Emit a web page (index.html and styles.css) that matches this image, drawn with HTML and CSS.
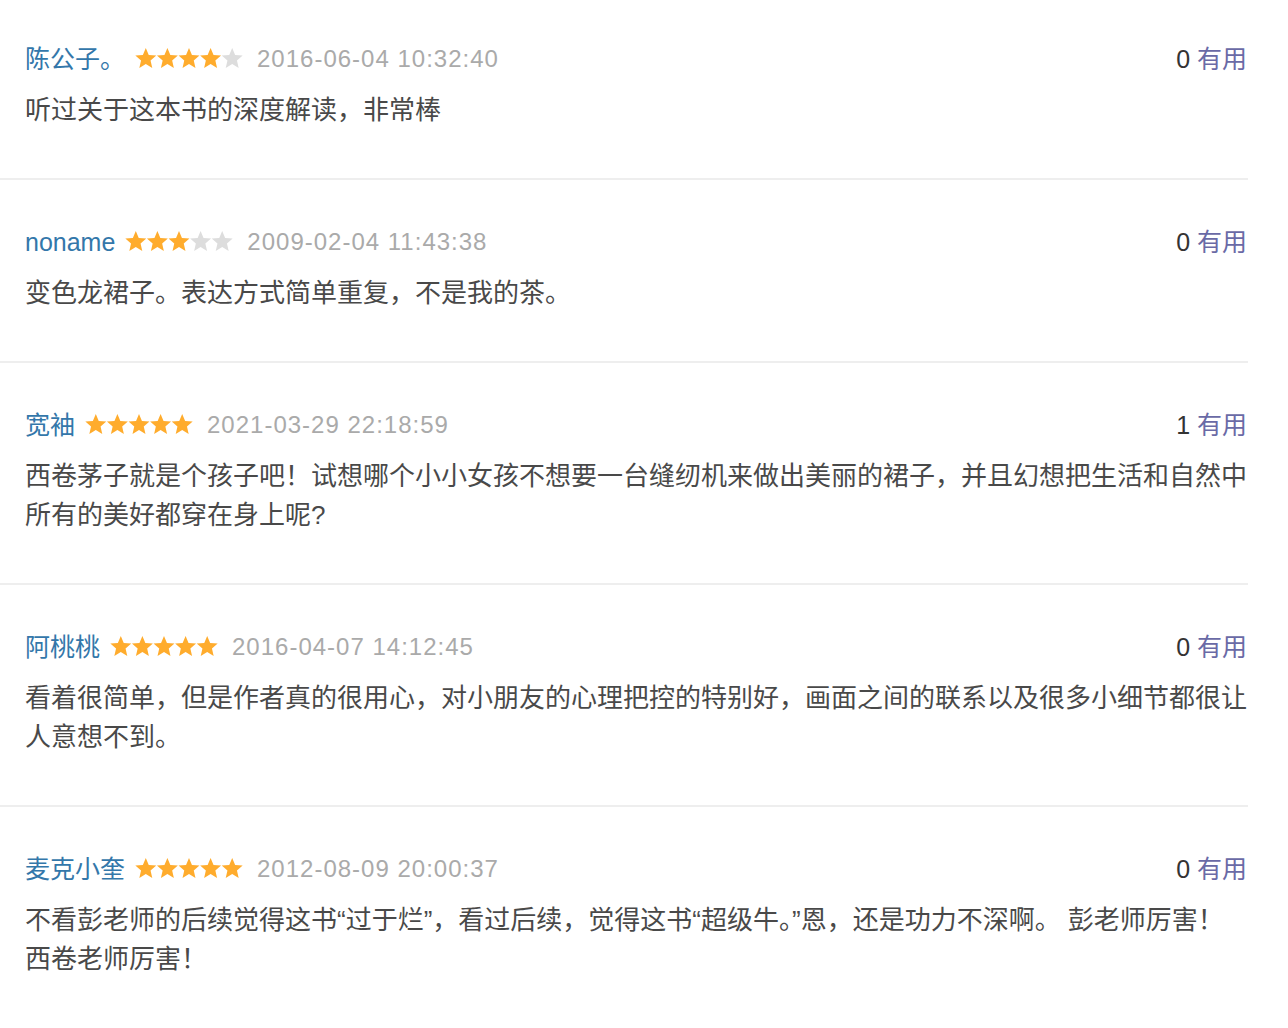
FILE: index.html
```html
<!DOCTYPE html>
<html lang="zh-CN">
<head>
<meta charset="utf-8">
<title>短评</title>
<link rel="stylesheet" href="styles.css">
</head>
<body>
<svg class="defs" width="0" height="0" aria-hidden="true">
  <defs>
    <path id="star" d="M10.8 0L13.74 6.95L21.26 7.6L15.56 12.55L17.27 19.9L10.8 16L4.33 19.9L6.04 12.55L0.34 7.6L7.86 6.95Z"/>
  </defs>
</svg>
<ul class="comments">
  <li class="item">
    <div class="head">
      <div class="meta">
        <a class="name">陈公子。</a>
        <svg class="stars" width="108" height="20" viewBox="0 0 108 20"><use href="#star" class="on" x="0"/><use href="#star" class="on" x="21.6"/><use href="#star" class="on" x="43.2"/><use href="#star" class="on" x="64.8"/><use href="#star" class="off" x="86.4"/></svg>
        <span class="time">2016-06-04 10:32:40</span>
      </div>
      <div class="vote"><span class="count">0</span> <a class="useful">有用</a></div>
    </div>
    <p class="text">听过关于这本书的深度解读，非常棒</p>
  </li>
  <li class="item">
    <div class="head">
      <div class="meta">
        <a class="name">noname</a>
        <svg class="stars" width="108" height="20" viewBox="0 0 108 20"><use href="#star" class="on" x="0"/><use href="#star" class="on" x="21.6"/><use href="#star" class="on" x="43.2"/><use href="#star" class="off" x="64.8"/><use href="#star" class="off" x="86.4"/></svg>
        <span class="time">2009-02-04 11:43:38</span>
      </div>
      <div class="vote"><span class="count">0</span> <a class="useful">有用</a></div>
    </div>
    <p class="text">变色龙裙子。表达方式简单重复，不是我的茶。</p>
  </li>
  <li class="item">
    <div class="head">
      <div class="meta">
        <a class="name">宽袖</a>
        <svg class="stars" width="108" height="20" viewBox="0 0 108 20"><use href="#star" class="on" x="0"/><use href="#star" class="on" x="21.6"/><use href="#star" class="on" x="43.2"/><use href="#star" class="on" x="64.8"/><use href="#star" class="on" x="86.4"/></svg>
        <span class="time">2021-03-29 22:18:59</span>
      </div>
      <div class="vote"><span class="count">1</span> <a class="useful">有用</a></div>
    </div>
    <p class="text">西卷茅子就是个孩子吧！试想哪个小小女孩不想要一台缝纫机来做出美丽的裙子，并且幻想把生活和自然中所有的美好都穿在身上呢?</p>
  </li>
  <li class="item">
    <div class="head">
      <div class="meta">
        <a class="name">阿桃桃</a>
        <svg class="stars" width="108" height="20" viewBox="0 0 108 20"><use href="#star" class="on" x="0"/><use href="#star" class="on" x="21.6"/><use href="#star" class="on" x="43.2"/><use href="#star" class="on" x="64.8"/><use href="#star" class="on" x="86.4"/></svg>
        <span class="time">2016-04-07 14:12:45</span>
      </div>
      <div class="vote"><span class="count">0</span> <a class="useful">有用</a></div>
    </div>
    <p class="text">看着很简单，但是作者真的很用心，对小朋友的心理把控的特别好，画面之间的联系以及很多小细节都很让人意想不到。</p>
  </li>
  <li class="item last">
    <div class="head">
      <div class="meta">
        <a class="name">麦克小奎</a>
        <svg class="stars" width="108" height="20" viewBox="0 0 108 20"><use href="#star" class="on" x="0"/><use href="#star" class="on" x="21.6"/><use href="#star" class="on" x="43.2"/><use href="#star" class="on" x="64.8"/><use href="#star" class="on" x="86.4"/></svg>
        <span class="time">2012-08-09 20:00:37</span>
      </div>
      <div class="vote"><span class="count">0</span> <a class="useful">有用</a></div>
    </div>
    <p class="text">不看彭老师的后续觉得这书“过于烂”，看过后续，觉得这书“超级牛。”恩，还是功力不深啊。 彭老师厉害！西卷老师厉害！</p>
  </li>
</ul>
</body>
</html>
```

FILE: styles.css
```css
html, body {
  margin: 0;
  padding: 0;
  background: #ffffff;
}

body {
  font-family: "Liberation Sans", Arial, "Noto Sans CJK SC", sans-serif;
  color: #494949;
}

.defs {
  position: absolute;
  width: 0;
  height: 0;
  overflow: hidden;
}

.comments {
  list-style: none;
  margin: 0;
  padding: 0;
  width: 1248px;
}

.item {
  padding: 44px 1px 48px 25px;
  border-bottom: 2px solid #eeeeee;
}

.item:first-child {
  padding-top: 41px;
}

.item.last {
  border-bottom: none;
}

.head {
  display: flex;
  justify-content: space-between;
  align-items: center;
  height: 36px;
}

.meta {
  display: flex;
  align-items: center;
}

.name {
  font-size: 25px;
  line-height: 36px;
  color: #3377aa;
  text-decoration: none;
}

.stars {
  display: block;
  margin-left: 10px;
  margin-top: -3px;
}

.stars .on {
  fill: #ffac2d;
}

.stars .off {
  fill: #dddddd;
}

.time {
  margin-left: 14px;
  font-family: "Liberation Sans", Arial, sans-serif;
  font-size: 24px;
  letter-spacing: 1px;
  line-height: 36px;
  color: #aaaaaa;
}

.vote {
  font-size: 25px;
  line-height: 36px;
  white-space: nowrap;
}

.count {
  color: #333333;
}

.useful {
  color: #6a6aa6;
  text-decoration: none;
}

.text {
  margin: 14px 0 0 0;
  font-size: 26px;
  line-height: 39px;
  color: #494949;
}
```
